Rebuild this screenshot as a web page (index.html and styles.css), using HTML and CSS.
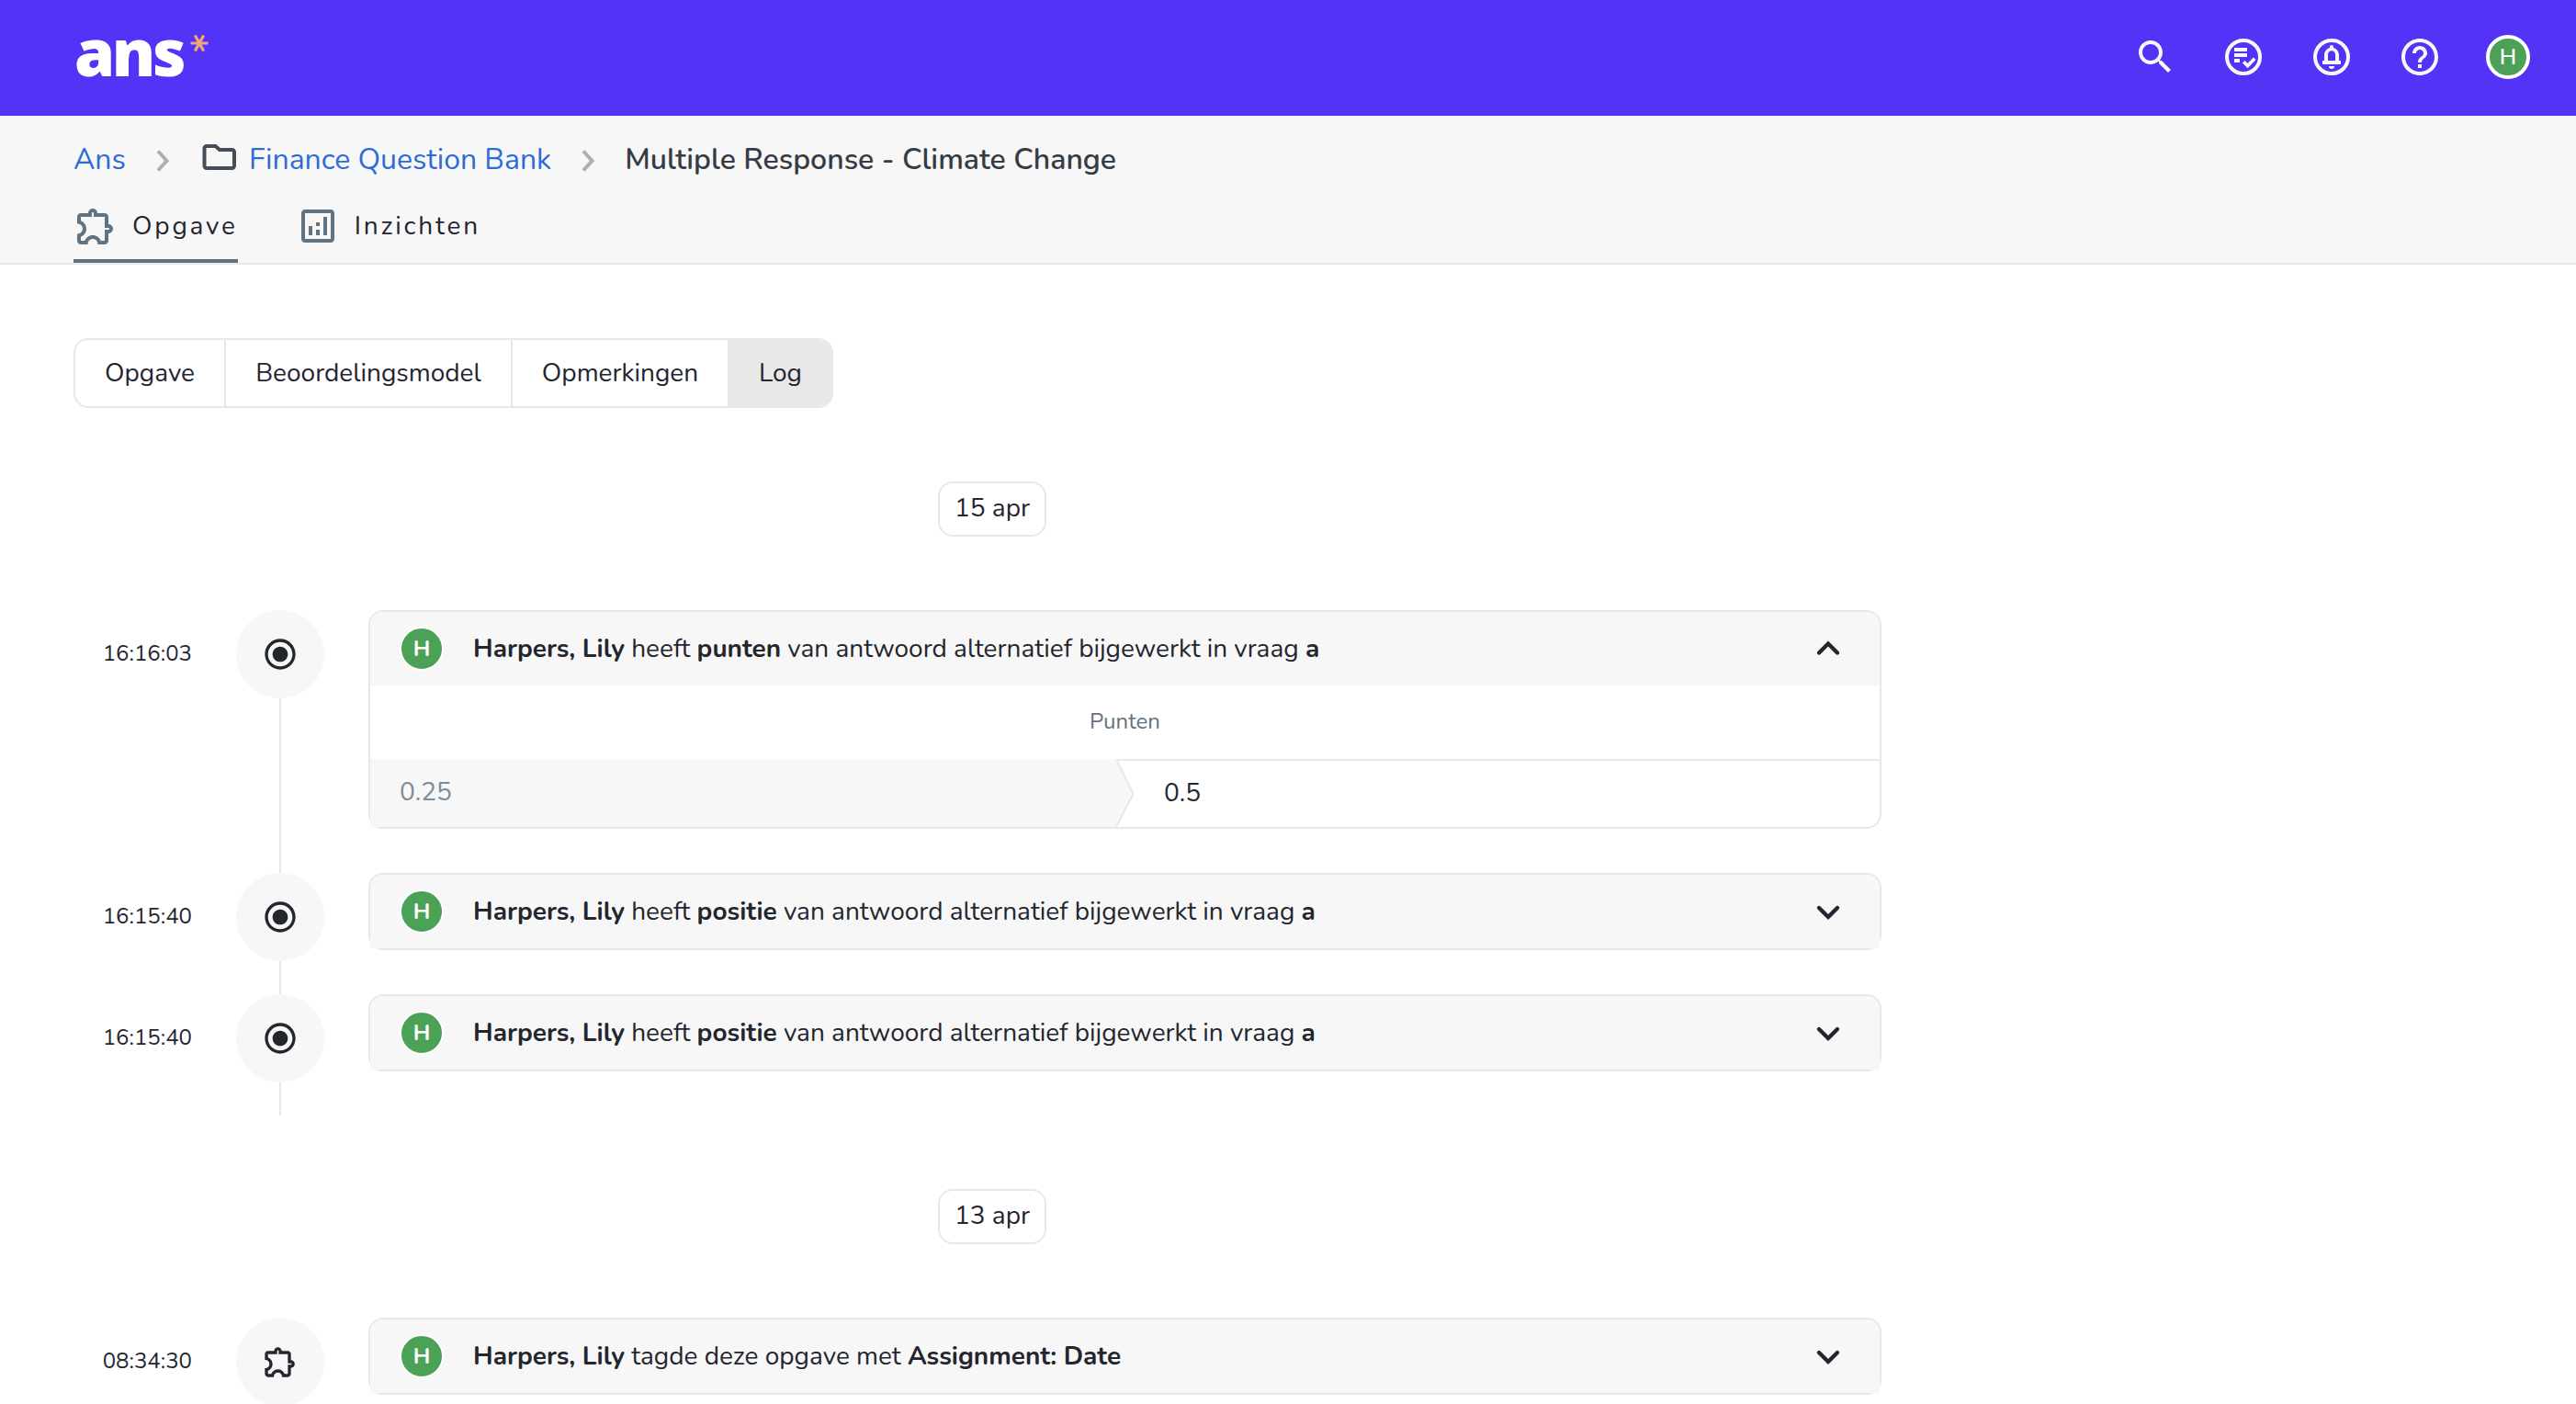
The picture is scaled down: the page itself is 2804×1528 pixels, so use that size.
FILE: index.html
```html
<!DOCTYPE html>
<html lang="nl">
<head>
  <meta charset="UTF-8">
  <title>Multiple Response - Climate Change | Ans</title>
  <link rel="stylesheet" href="styles.css">
</head>
<body>
  <!-- Shared icons -->
  <svg class="sprite" width="0" height="0">
    <symbol id="puzzle" viewBox="0 0 24 24">
      <path d="M10.5 4.5c.28 0 .5.22.5.5v2h6v6h2c.28 0 .5.22.5.5s-.22.5-.5.5h-2v6h-2.12c-.68-1.75-2.39-3-4.38-3s-3.7 1.25-4.38 3H4v-2.12c1.75-.68 3-2.39 3-4.38 0-1.99-1.24-3.7-2.99-4.38L4 7h6V5c0-.28.22-.5.5-.5m0-2C9.12 2.5 8 3.62 8 5H4c-1.1 0-1.99.9-1.99 2v3.8h.29c1.49 0 2.7 1.21 2.7 2.7s-1.21 2.7-2.7 2.7H2V20c0 1.1.9 2 2 2h3.8v-.3c0-1.49 1.21-2.7 2.7-2.7s2.7 1.21 2.7 2.7v.3H17c1.1 0 2-.9 2-2v-4c1.38 0 2.5-1.12 2.5-2.5S20.38 11 19 11V7c0-1.1-.9-2-2-2h-4c0-1.38-1.12-2.5-2.5-2.5z"/>
    </symbol>
    <symbol id="radio" viewBox="0 0 24 24">
      <path d="M12 7c-2.76 0-5 2.24-5 5s2.24 5 5 5 5-2.24 5-5-2.24-5-5-5zm0-5C6.48 2 2 6.48 2 12s4.48 10 10 10 10-4.48 10-10S17.52 2 12 2zm0 18c-4.42 0-8-3.58-8-8s3.58-8 8-8 8 3.58 8 8-3.58 8-8 8z"/>
    </symbol>
    <symbol id="down" viewBox="0 0 48 48">
      <path d="M14 20l10 10 10-10" fill="none" stroke="currentColor" stroke-width="4.4" stroke-linecap="round"/>
    </symbol>
    <symbol id="up" viewBox="0 0 48 48">
      <path d="M14 28.5l10-10 10 10" fill="none" stroke="currentColor" stroke-width="4.4" stroke-linecap="round"/>
    </symbol>
    <symbol id="crumb" viewBox="0 0 16 24">
      <path d="M3 1.5l9.5 10.5L3 22.5" fill="none" stroke="currentColor" stroke-width="4"/>
    </symbol>
  </svg>

  <header class="topbar">
    <div class="logo">
      <span>ans</span>
      <svg class="star" viewBox="0 0 20 20"><path d="M.5 10h19M5.3 1.5l9.4 17M14.7 1.5l-9.4 17"/></svg>
    </div>
    <nav class="actions">
      <svg class="icon" viewBox="0 0 24 24"><path d="M15.5 14h-.79l-.28-.27C15.41 12.59 16 11.11 16 9.5 16 5.91 13.09 3 9.5 3S3 5.91 3 9.5 5.91 16 9.5 16c1.61 0 3.09-.59 4.23-1.57l.27.28v.79l5 4.99L20.49 19l-4.99-5zm-6 0C7.01 14 5 11.99 5 9.5S7.01 5 9.5 5 14 7.01 14 9.5 11.99 14 9.5 14z"/></svg>
      <svg class="icon" viewBox="0 0 24 24">
        <circle class="ring" cx="12" cy="12" r="9"/>
        <path d="M7 7h7v2H7zM7 10h7v2H7zM7 13h3v2H7z"/>
        <path class="ring check" d="M12.1 14.6l2.2 2.2 3.8-3.9"/>
      </svg>
      <svg class="icon" viewBox="0 0 24 24">
        <circle class="ring" cx="12" cy="12" r="9"/>
        <path d="M16 14v-3c0-1.93-1.3-3.56-3-4v-.5c0-.55-.45-1-1-1s-1 .45-1 1V7c-1.7.44-3 2.07-3 4v3H7v2h10v-2h-1zm-2 0h-4v-3.3c0-1.2.8-2.1 2-2.1s2 .9 2 2.1V14zM10.5 17h3a1.5 1.5 0 0 1-3 0z"/>
      </svg>
      <svg class="icon" viewBox="0 0 24 24"><path d="M11 18h2v-2h-2v2zm1-16C6.48 2 2 6.48 2 12s4.48 10 10 10 10-4.48 10-10S17.52 2 12 2zm0 18c-4.41 0-8-3.59-8-8s3.59-8 8-8 8 3.59 8 8-3.59 8-8 8zm0-14c-2.21 0-4 1.79-4 4h2c0-1.1.9-2 2-2s2 .9 2 2c0 2-3 1.75-3 5h2c0-2.25 3-2.5 3-5 0-2.21-1.79-4-4-4z"/></svg>
      <span class="avatar user">H</span>
    </nav>
  </header>

  <div class="subheader">
    <div class="breadcrumb">
      <a href="#">Ans</a>
      <svg class="crumb"><use href="#crumb"/></svg>
      <svg class="folder" viewBox="0 0 42 32"><path d="M8 4h9.5l4.5 4h13.5a2.5 2.5 0 0 1 2.5 2.5v15a2.500 2.500 0 0 1-2.500 2.500H8a2.500 2.500 0 0 1-2.500-2.500v-19A2.500 2.500 0 0 1 8 4z"/></svg>
      <a href="#">Finance Question Bank</a>
      <svg class="crumb"><use href="#crumb"/></svg>
      <span class="title">Multiple Response - Climate Change</span>
    </div>
    <div class="tabs">
      <a class="tab active" href="#"><svg class="icon"><use href="#puzzle"/></svg><span>Opgave</span></a>
      <a class="tab" href="#">
        <svg class="icon" viewBox="0 0 24 24"><path d="M19 3H5c-1.1 0-2 .9-2 2v14c0 1.1.9 2 2 2h14c1.1 0 2-.9 2-2V5c0-1.1-.9-2-2-2zm0 16H5V5h14v14zM7 12h2v5H7zM15 7h2v10h-2zM11 14h2v3h-2zM11 10h2v2h-2z"/></svg><span>Inzichten</span>
      </a>
    </div>
  </div>

  <main>
    <div class="segments">
      <a class="s1" href="#">Opgave</a>
      <a class="s2" href="#">Beoordelingsmodel</a>
      <a class="s3" href="#">Opmerkingen</a>
      <a class="s4 selected" href="#">Log</a>
    </div>

    <div class="day"><span>15 apr</span></div>

    <div class="entry">
      <time>16:16:03</time>
      <div class="marker"><span class="dot"><svg><use href="#radio"/></svg></span></div>
      <div class="card">
        <div class="card-header">
          <span class="avatar">H</span>
          <p><b>Harpers, Lily</b> heeft <b>punten</b> van antwoord alternatief bijgewerkt in vraag <b>a</b></p>
          <svg class="icon"><use href="#up"/></svg>
        </div>
        <div class="field">Punten</div>
        <div class="change">
          <div class="old">0.25</div>
          <svg class="arrow" viewBox="0 0 20 74">
            <path d="M0 0h20v2H0z" fill="#e8e8e8"/>
            <path d="M0 0L18.5 38 0 74z" fill="#f7f7f7"/>
            <path d="M0 0L18.5 38 0 74" fill="none" stroke="#e8e8e8" stroke-width="2"/>
          </svg>
          <div class="new">0.5</div>
        </div>
      </div>
    </div>

    <div class="entry">
      <time>16:15:40</time>
      <div class="marker"><span class="dot"><svg><use href="#radio"/></svg></span></div>
      <div class="card">
        <div class="card-header">
          <span class="avatar">H</span>
          <p><b>Harpers, Lily</b> heeft <b>positie</b> van antwoord alternatief bijgewerkt in vraag <b>a</b></p>
          <svg class="icon"><use href="#down"/></svg>
        </div>
      </div>
    </div>

    <div class="entry">
      <time>16:15:40</time>
      <div class="marker"><span class="dot"><svg><use href="#radio"/></svg></span></div>
      <div class="card">
        <div class="card-header">
          <span class="avatar">H</span>
          <p><b>Harpers, Lily</b> heeft <b>positie</b> van antwoord alternatief bijgewerkt in vraag <b>a</b></p>
          <svg class="icon"><use href="#down"/></svg>
        </div>
      </div>
    </div>

    <div class="day"><span>13 apr</span></div>

    <div class="entry">
      <time>08:34:30</time>
      <div class="marker"><span class="dot"><svg><use href="#puzzle"/></svg></span></div>
      <div class="card">
        <div class="card-header">
          <span class="avatar">H</span>
          <p><b>Harpers, Lily</b> tagde deze opgave met <b>Assignment: Date</b></p>
          <svg class="icon"><use href="#down"/></svg>
        </div>
      </div>
    </div>
  </main>
</body>
</html>
```
FILE: styles.css
```css
* {
  box-sizing: border-box;
}

html, body {
  height: 100%;
  overflow: hidden;
}

body {
  margin: 0;
  background: #fff;
  color: #23262f;
  font-family: Nunito, Lato, sans-serif;
  font-size: 28px;
}

a {
  color: inherit;
  text-decoration: none;
}

p {
  margin: 0;
}

svg {
  display: block;
  flex: none;
  fill: currentColor;
}

.sprite {
  display: none;
}

.icon {
  width: 48px;
  height: 48px;
}

.avatar {
  flex: none;
  display: flex;
  align-items: center;
  justify-content: center;
  width: 48px;
  height: 48px;
  border: 2px solid #fff;
  border-radius: 50%;
  background: #4ba257;
  color: #fff;
  font-size: 24px;
  font-weight: 700;
}

/* Top bar */
.topbar {
  display: flex;
  justify-content: space-between;
  height: 126px;
  padding: 0 50px 2px 81px;
  background: #5333f5;
  color: #f7f7f7;
}

.logo {
  display: flex;
  align-items: flex-start;
  color: #fff;
  font: 800 71px/111px "Open Sans", sans-serif;
  letter-spacing: -3.4px;
}

.star {
  width: 20px;
  height: 20px;
  margin: 37px 0 0 8px;
  fill: none;
  stroke: #eca87b;
  stroke-width: 3.2;
}

.actions {
  display: flex;
  align-items: center;
  gap: 48px;
}

.ring {
  fill: none;
  stroke: currentColor;
  stroke-width: 2;
}

.check {
  stroke-width: 1.8;
}

.user {
  border-width: 4px;
  font-weight: 600;
}

/* Breadcrumb and tabs */
.subheader {
  height: 162px;
  padding: 0 80px;
  background: #f7f7f7;
  border-bottom: 2px solid #e8e8e8;
}

.breadcrumb {
  display: flex;
  align-items: center;
  height: 92px;
  padding-top: 3px;
  font-size: 32px;
}

.breadcrumb a {
  color: #2d6bd6;
}

.crumb {
  width: 16px;
  height: 24px;
  margin: 2px 32px 0;
  color: #a5b2b9;
}

.folder {
  width: 42px;
  height: 32px;
  margin: -5px 12px 0 0;
  fill: none;
  stroke: #454e58;
  stroke-width: 4;
}

.title {
  color: #363c44;
  font-weight: 600;
}

.tabs {
  display: flex;
  gap: 63px;
  height: 68px;
}

.tab {
  display: flex;
  align-items: center;
  gap: 16px;
  padding-bottom: 12px;
  letter-spacing: 2.8px;
}

.tab .icon {
  color: #617280;
}

.tab.active {
  padding-bottom: 8px;
  border-bottom: 4px solid #617280;
}

/* Page */
main {
  width: 2080px;
  padding: 80px 0 0 80px;
}

.segments {
  display: flex;
  width: 827px;
  height: 76px;
  border: 2px solid #e8e8e8;
  border-radius: 16px;
  overflow: hidden;
}

.segments a {
  display: flex;
  align-items: center;
  justify-content: center;
  border-right: 2px solid #e8e8e8;
}

.segments .s1 {
  width: 164px;
}

.segments .s2 {
  width: 312px;
}

.segments .s3 {
  width: 236px;
}

.segments .s4 {
  flex: 1;
  border: 0;
}

.segments .selected {
  background: #e8e8e8;
}

.day {
  display: flex;
  justify-content: center;
  padding: 80px 0;
}

.day span {
  height: 60px;
  padding: 0 16px;
  border: 2px solid #e8e8e8;
  border-radius: 16px;
  line-height: 55px;
}

/* Timeline */
.entry {
  display: grid;
  grid-template-columns: 129px 96px 1fr;
  column-gap: 48px;
}

.entry time {
  font-size: 24px;
  line-height: 95px;
  text-align: right;
}

.marker {
  display: flex;
  flex-direction: column;
  align-items: center;
}

.marker::after {
  content: "";
  flex: 1;
  width: 2px;
  background: #e8e8e8;
}

.dot {
  display: flex;
  align-items: center;
  justify-content: center;
  width: 96px;
  height: 96px;
  border-radius: 50%;
  background: #f7f7f7;
}

.dot svg {
  width: 40px;
  height: 40px;
}

.card {
  margin: 0 32px 48px 0;
  border: 2px solid #e8e8e8;
  border-radius: 16px;
}

.card-header {
  display: flex;
  align-items: center;
  height: 80px;
  padding: 0 32px;
  border-radius: 14px 14px 0 0;
  background: #f7f7f7;
}

.card-header p {
  flex: 1;
  margin-left: 32px;
}

.field {
  height: 80px;
  color: #617280;
  font-size: 24px;
  line-height: 79px;
  text-align: center;
}

.change {
  display: flex;
  height: 74px;
}

.old {
  width: 812px;
  padding-left: 32px;
  background: #f7f7f7;
  color: #7b8d9b;
  line-height: 73px;
}

.arrow {
  width: 20px;
  height: 74px;
}

.new {
  flex: 1;
  padding-left: 32px;
  border-top: 2px solid #e8e8e8;
  line-height: 71px;
}
```
